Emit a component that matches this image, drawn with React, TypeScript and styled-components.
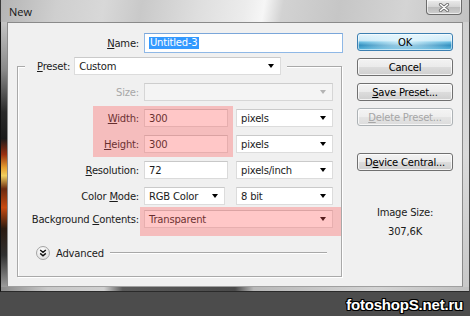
import React from "react";
import styled, { createGlobalStyle, css } from "styled-components";

const Global = createGlobalStyle`
  html, body { margin: 0; padding: 0; }
  body {
    width: 470px;
    height: 316px;
    overflow: hidden;
    background: #4c4c4c;
    font-family: "DejaVu Sans", Tahoma, sans-serif;
    font-size: 10px;
    letter-spacing: -0.2px;
    color: #1b1b1b;
  }
  * { box-sizing: border-box; }
`;

const Page = styled.div`
  width: 470px;
  height: 316px;
  display: flex;
  flex-direction: column;
  background: #4c4c4c;
`;

const Window = styled.div`
  width: 470px;
  height: 292px;
  display: flex;
  flex-direction: column;
`;

const TitleBar = styled.div`
  height: 22px;
  flex: none;
  display: flex;
  justify-content: space-between;
  align-items: flex-start;
  padding: 0 7px 0 8px;
  border-left: 1px solid #3a3a3a;
  border-right: 1px solid #5a5a5a;
  background: linear-gradient(
    100deg,
    #b4b4b4 0%,
    #cfcfcf 12%,
    #d8d8d8 22%,
    #c9c9c9 30%,
    #dedede 42%,
    #ececec 52%,
    #f6f6f6 56%,
    #d2d2d2 60%,
    #c6c6c6 72%,
    #d4d4d4 86%,
    #c2c2c2 100%
  );
`;

const Title = styled.span`
  font-family: "Open Sans", "Noto Sans", sans-serif;
  font-size: 11px;
  letter-spacing: 0;
  line-height: 22px;
  padding-top: 1px;
  color: #151515;
`;

const CloseButton = styled.div`
  width: 36px;
  height: 15px;
  display: flex;
  align-items: center;
  justify-content: center;
  border: 1px solid #6c6c6c;
  border-top: none;
  border-radius: 0 0 4px 4px;
  background: linear-gradient(#ececec 0%, #d6d6d6 48%, #bdbdbd 52%, #cfcfcf 100%);
  box-shadow: inset 0 0 0 1px rgba(255, 255, 255, 0.6);
`;

const FrameBody = styled.div`
  flex: 1;
  display: flex;
  min-height: 0;
`;

const LeftEdge = styled.div`
  width: 7px;
  flex: none;
  border-left: 1px solid #111;
  background: linear-gradient(
    to bottom,
    #c4c4c4 0%,
    #8a8a8a 18%,
    #2a2a2a 34%,
    #1a1a1a 44%,
    #9a3010 50%,
    #e6a030 55%,
    #f0d060 58%,
    #6a2a10 63%,
    #c84a10 70%,
    #2a1a10 78%,
    #303030 88%,
    #9c9c9c 100%
  );
`;

const RightEdge = styled.div`
  width: 7px;
  flex: none;
  border-right: 1px solid #4a4a4a;
  background: linear-gradient(to bottom, #d0d0d0, #dadada 50%, #c8c8c8);
`;

const BottomEdge = styled.div`
  height: 5px;
  flex: none;
  border-left: 1px solid #111;
  border-right: 1px solid #4a4a4a;
  border-bottom: 1px solid #2a2a2a;
  background: linear-gradient(
    to right,
    #8a8a8a 0%,
    #c8c8c8 10%,
    #d0d0d0 22%,
    #5a5a5a 26%,
    #4a4a4a 50%,
    #b8b8b8 54%,
    #d4d4d4 80%,
    #c0c0c0 100%
  );
`;

const Client = styled.div`
  flex: 1;
  display: flex;
  align-items: flex-start;
  padding-top: 10px;
  border: 1px solid #8a8a8a;
  border-bottom-color: #a0a0a0;
  background: #f0f0f0;
`;

const FormArea = styled.div`
  width: 335px;
  flex: none;
  display: flex;
  flex-direction: column;
`;

const NameRow = styled.div`
  display: flex;
  align-items: center;
  height: 20px;
`;

const Label = styled.label<{ $w?: number; $disabled?: boolean }>`
  width: ${(p) => p.$w ?? 119}px;
  flex: none;
  padding-right: 5px;
  text-align: right;
  white-space: nowrap;
  color: ${(p) => (p.$disabled ? "#a7a7a7" : "#1b1b1b")};
`;

const Key = styled.span`
  text-decoration: underline;
  text-underline-offset: 1px;
`;

const TextField = styled.div<{ $w: number; $focused?: boolean; $h?: number }>`
  width: ${(p) => p.$w}px;
  height: ${(p) => p.$h ?? 18}px;
  flex: none;
  display: flex;
  align-items: center;
  padding-left: 4px;
  background: #fff;
  border: 1px solid ${(p) => (p.$focused ? "#8fb8e6" : "#dadada")};
  border-top-color: ${(p) => (p.$focused ? "#7aa6da" : "#c8c8c8")};
  white-space: nowrap;
`;

const Selected = styled.span`
  background: #3399ff;
  color: #fff;
  padding: 0 1px;
  line-height: 12px;
`;

const SelectBox = styled.div<{ $w: number; $ml?: number; $disabled?: boolean }>`
  width: ${(p) => p.$w}px;
  height: 18px;
  flex: none;
  margin-left: ${(p) => p.$ml ?? 0}px;
  display: flex;
  align-items: center;
  justify-content: space-between;
  padding: 0 6px 0 4px;
  background: ${(p) => (p.$disabled ? "#f4f4f4" : "#fff")};
  border: 1px solid ${(p) => (p.$disabled ? "#d6d6d6" : "#dcdcdc")};
  border-top-color: ${(p) => (p.$disabled ? "#cdcdcd" : "#cacaca")};
  white-space: nowrap;
`;

const Arrow = styled.span<{ $disabled?: boolean }>`
  width: 0;
  height: 0;
  border-left: 3.5px solid transparent;
  border-right: 3.5px solid transparent;
  border-top: 4px solid ${(p) => (p.$disabled ? "#b4b4b4" : "#000")};
`;

const Group = styled.fieldset`
  margin: 4px 0 0 9px;
  width: 325px;
  min-width: 0;
  padding: 0 7px 16px 7px;
  border: 1px solid #a9a9a9;
  box-shadow: inset 1px 1px 0 #fff, 1px 1px 0 #fff;
`;

const Legend = styled.legend`
  display: flex;
  align-items: center;
  gap: 4px;
  padding: 0 6px 0 12px;
  background: #f0f0f0;
`;

const Rows = styled.div`
  position: relative;
  margin-top: 8px;
  display: flex;
  flex-direction: column;
  gap: 8px;
`;

const Row = styled.div<{ $mt?: number }>`
  display: flex;
  align-items: center;
  height: 18px;
  margin-top: ${(p) => p.$mt ?? 0}px;
`;

const Highlight = styled.div`
  position: absolute;
  background: rgba(255, 84, 84, 0.33);
  pointer-events: none;
`;

const AdvancedRow = styled.div`
  display: flex;
  align-items: center;
  gap: 6px;
  height: 14px;
  margin-top: 18px;
  padding: 0 7px 0 11px;
`;

const RoundIcon = styled.span`
  width: 14px;
  height: 14px;
  flex: none;
  display: flex;
  align-items: center;
  justify-content: center;
  border-radius: 50%;
  border: 1px solid #a4a4a4;
  background: radial-gradient(circle at 40% 30%, #ffffff, #e4e4e4 70%, #d0d0d0);
`;

const Rule = styled.span`
  flex: 1;
  height: 2px;
  border-top: 1px solid #a8a8a8;
  border-bottom: 1px solid #fff;
`;

const ButtonColumn = styled.div`
  width: 96px;
  flex: none;
  margin-left: 14px;
  display: flex;
  flex-direction: column;
  gap: 7px;
`;

const Button = styled.div<{ $primary?: boolean; $disabled?: boolean; $mt?: number }>`
  height: 18px;
  margin-top: ${(p) => p.$mt ?? 0}px;
  display: flex;
  align-items: center;
  justify-content: center;
  border-radius: 3px;
  border: 1px solid #707070;
  color: #000;
  white-space: nowrap;
  background: linear-gradient(#f3f3f3 0%, #ebebeb 48%, #dcdcdc 52%, #cfcfcf 100%);
  box-shadow: inset 0 0 0 1px rgba(255, 255, 255, 0.75);
  ${(p) =>
    p.$primary &&
    css`
      border-color: #3c7fb1;
      background: radial-gradient(ellipse 55% 70% at 50% 50%, rgba(235, 250, 255, 0.85), rgba(235, 250, 255, 0) 100%),
        linear-gradient(#e6f5fc 0%, #c8e8f7 40%, #55b3dc 52%, #2688bb 70%, #68c0e4 100%);
      box-shadow: inset 0 0 0 1px rgba(255, 255, 255, 0.55);
    `}
  ${(p) =>
    p.$disabled &&
    css`
      color: #a6a6a6;
      border-color: #adb2b5;
      background: linear-gradient(#f4f4f4 0%, #eeeeee 48%, #e4e4e4 52%, #dcdcdc 100%);
    `}
`;

const SizeInfo = styled.div`
  margin-top: 28px;
  display: flex;
  flex-direction: column;
  align-items: center;
  gap: 6px;
  line-height: 13px;
  color: #1b1b1b;
`;

const Footer = styled.div`
  flex: 1;
  display: flex;
  align-items: center;
  justify-content: flex-end;
  padding-right: 7px;
`;

const Watermark = styled.span`
  font-family: "Liberation Sans", Arial, sans-serif;
  font-size: 15px;
  font-weight: bold;
  letter-spacing: -0.2px;
  color: #fff;
  text-shadow: 1px 0 0 #000, -1px 0 0 #000, 0 1px 0 #000, 0 -1px 0 #000, 1px 1px 0 #000, -1px -1px 0 #000,
    1px -1px 0 #000, -1px 1px 0 #000;
`;

const CloseGlyph = () => (
  <svg width="12" height="9" viewBox="0 0 12 9">
    <path d="M2.5 1.5 L9.5 7.5 M9.5 1.5 L2.5 7.5" stroke="#707070" strokeWidth="3.2" strokeLinecap="round" />
    <path d="M2.5 1.5 L9.5 7.5 M9.5 1.5 L2.5 7.5" stroke="#ffffff" strokeWidth="1.5" strokeLinecap="round" />
  </svg>
);

const ChevronsDown = () => (
  <svg width="8" height="8" viewBox="0 0 8 8">
    <path d="M1.2 1 L4 3.4 L6.8 1 M1.2 4.4 L4 6.8 L6.8 4.4" fill="none" stroke="#111" strokeWidth="1.4" />
  </svg>
);

export default function App() {
  return (
    <>
      <Global />
      <Page>
        <Window>
          <TitleBar>
            <Title>New</Title>
            <CloseButton>
              <CloseGlyph />
            </CloseButton>
          </TitleBar>
          <FrameBody>
            <LeftEdge />
            <Client>
              <FormArea>
                <NameRow>
                  <Label $w={136}>
                    <Key>N</Key>ame:
                  </Label>
                  <TextField $w={199} $h={20} $focused>
                    <Selected>Untitled-3</Selected>
                  </TextField>
                </NameRow>
                <Group>
                  <Legend>
                    <span>
                      <Key>P</Key>reset:
                    </span>
                    <SelectBox $w={207}>
                      Custom
                      <Arrow />
                    </SelectBox>
                  </Legend>
                  <Rows>
                    <Row>
                      <Label $disabled>Size:</Label>
                      <SelectBox $w={189} $disabled>
                        <span />
                        <Arrow $disabled />
                      </SelectBox>
                    </Row>
                    <Row>
                      <Label>
                        <Key>W</Key>idth:
                      </Label>
                      <TextField $w={84}>300</TextField>
                      <SelectBox $w={97} $ml={8}>
                        pixels
                        <Arrow />
                      </SelectBox>
                    </Row>
                    <Row>
                      <Label>
                        <Key>H</Key>eight:
                      </Label>
                      <TextField $w={84}>300</TextField>
                      <SelectBox $w={97} $ml={8}>
                        pixels
                        <Arrow />
                      </SelectBox>
                    </Row>
                    <Row>
                      <Label>
                        <Key>R</Key>esolution:
                      </Label>
                      <TextField $w={84}>72</TextField>
                      <SelectBox $w={97} $ml={8}>
                        pixels/inch
                        <Arrow />
                      </SelectBox>
                    </Row>
                    <Row>
                      <Label>
                        Color <Key>M</Key>ode:
                      </Label>
                      <SelectBox $w={81}>
                        RGB Color
                        <Arrow />
                      </SelectBox>
                      <SelectBox $w={97} $ml={11}>
                        8 bit
                        <Arrow />
                      </SelectBox>
                    </Row>
                    <Row $mt={-3}>
                      <Label>
                        Background <Key>C</Key>ontents:
                      </Label>
                      <SelectBox $w={189}>
                        Transparent
                        <Arrow />
                      </SelectBox>
                    </Row>
                    <Highlight style={{ left: 68, top: 23, width: 140, height: 51 }} />
                    <Highlight style={{ left: 115, top: 124, width: 201, height: 29 }} />
                  </Rows>
                  <AdvancedRow>
                    <RoundIcon>
                      <ChevronsDown />
                    </RoundIcon>
                    <span>Advanced</span>
                    <Rule />
                  </AdvancedRow>
                </Group>
              </FormArea>
              <ButtonColumn>
                <Button $primary>OK</Button>
                <Button>Cancel</Button>
                <Button>
                  <span>
                    <Key>S</Key>ave Preset...
                  </span>
                </Button>
                <Button $disabled>
                  <span>
                    <Key>D</Key>elete Preset...
                  </span>
                </Button>
                <Button $mt={20}>
                  <span>
                    D<Key>e</Key>vice Central...
                  </span>
                </Button>
                <SizeInfo>
                  <span>Image Size:</span>
                  <span>307,6K</span>
                </SizeInfo>
              </ButtonColumn>
            </Client>
            <RightEdge />
          </FrameBody>
          <BottomEdge />
        </Window>
        <Footer>
          <Watermark>fotoshopS.net.ru</Watermark>
        </Footer>
      </Page>
    </>
  );
}
